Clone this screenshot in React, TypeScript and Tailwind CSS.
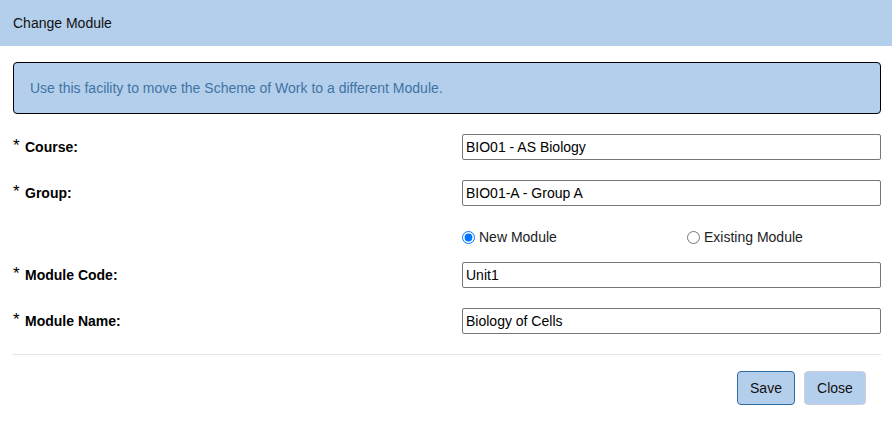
import React from 'react';

const font = { fontFamily: '"Liberation Sans", Arial, sans-serif' };

function Field({ label, value }: { label: string; value: string }) {
  return (
    <div className="flex items-center h-[26px]">
      <div className="w-[449px] flex items-start text-[14px] font-bold text-black">
        <span className="text-[17px] leading-[16px] font-normal w-[12px]">*</span>
        <span className="leading-[18px]">{label}</span>
      </div>
      <input
        readOnly
        value={value}
        className="flex-1 h-[26px] border border-[#767676] rounded-[2px] px-[3px] text-[14px] text-black outline-none"
        style={font}
      />
    </div>
  );
}

export default function App() {
  return (
    <div className="w-[892px] h-[432px] bg-white text-[14px]" style={font}>
      <div className="h-[46px] bg-[#b4cfec] flex items-center px-[13px] text-[#111]">
        Change Module
      </div>
      <div className="px-[13px] pt-[16px] pr-[11px]">
        <div className="h-[52px] border border-black rounded-[4px] bg-[#b4cfec] flex items-center px-[16px] text-[#3f74a3]">
          Use this facility to move the Scheme of Work to a different Module.
        </div>
        <div className="mt-[20px] flex flex-col">
          <Field label="Course:" value="BIO01 - AS Biology" />
          <div className="h-[20px]" />
          <Field label="Group:" value="BIO01-A - Group A" />
          <div className="flex items-center h-[56px] pt-[6px] pl-[449px] text-[#222]">
            <label className="w-[225px] flex items-center gap-[4px]">
              <input type="radio" name="m" defaultChecked className="m-0 w-[13px] h-[13px]" />
              New Module
            </label>
            <label className="flex items-center gap-[4px]">
              <input type="radio" name="m" className="m-0 w-[13px] h-[13px]" />
              Existing Module
            </label>
          </div>
          <Field label="Module Code:" value="Unit1" />
          <div className="h-[20px]" />
          <Field label="Module Name:" value="Biology of Cells" />
        </div>
        <div className="mt-[20px] h-px bg-[#e5e5e5]" />
        <div className="flex justify-end gap-[9px] pt-[16px] pr-[15px]">
          <button className="w-[58px] h-[34px] rounded-[4px] border border-[#2e6da4] bg-[#b4cfec] text-[14px] text-[#111]">
            Save
          </button>
          <button className="w-[62px] h-[34px] rounded-[4px] border border-[#c8d3de] bg-[#b4cfec] text-[14px] text-[#111]">
            Close
          </button>
        </div>
      </div>
    </div>
  );
}
